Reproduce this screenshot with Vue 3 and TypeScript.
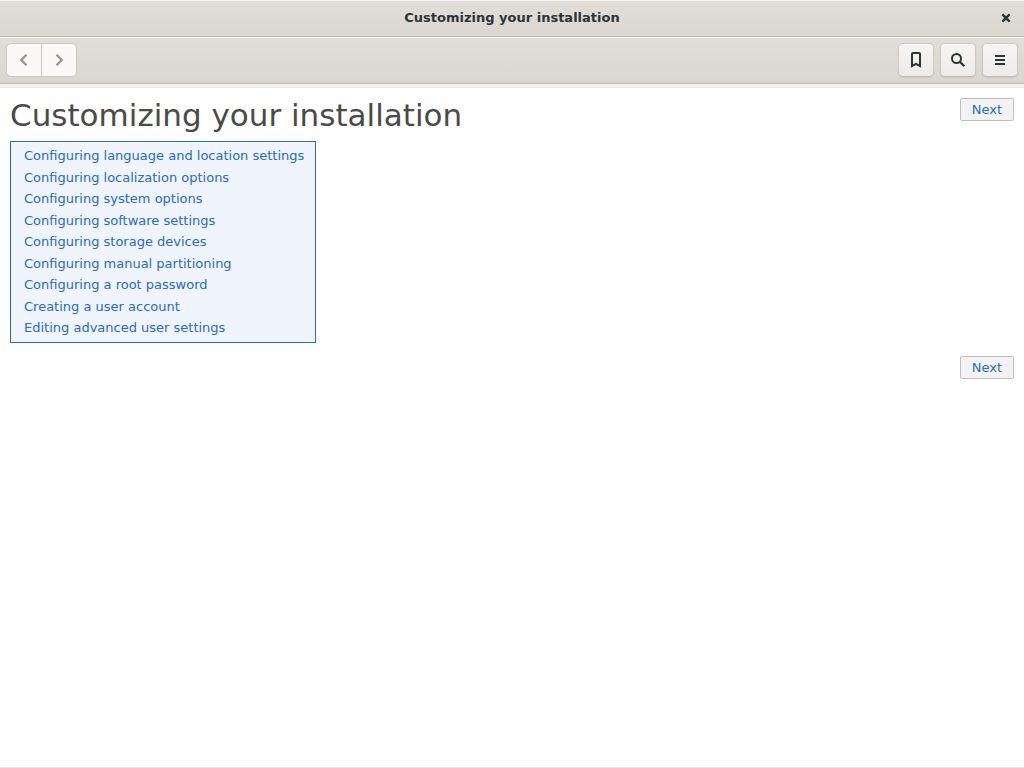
<script setup lang="ts">
import { ref } from 'vue'

const title = ref<string>('Customizing your installation')

const topics: string[] = [
  'Configuring language and location settings',
  'Configuring localization options',
  'Configuring system options',
  'Configuring software settings',
  'Configuring storage devices',
  'Configuring manual partitioning',
  'Configuring a root password',
  'Creating a user account',
  'Editing advanced user settings',
]
</script>

<template>
  <div class="window">
    <header class="titlebar">
      <span class="caption">{{ title }}</span>
      <button class="close" type="button" aria-label="Close">
        <svg width="16" height="16" viewBox="0 0 16 16"><path d="M4.400 4.400 11.600 11.600M11.600 4.400 4.400 11.600" fill="none" stroke="#2e3436" stroke-width="2.400" /></svg>
      </button>
    </header>

    <nav class="toolbar">
      <div class="history">
        <button type="button" disabled aria-label="Back">
          <svg width="16" height="16" viewBox="0 0 16 16"><path d="M10.500 2.700 5.200 8l5.300 5.300" fill="none" stroke="#929595" stroke-width="2.200" /></svg>
        </button>
        <button type="button" disabled aria-label="Forward">
          <svg width="16" height="16" viewBox="0 0 16 16"><path d="M5.500 2.700 10.800 8l-5.300 5.300" fill="none" stroke="#929595" stroke-width="2.200" /></svg>
        </button>
      </div>
      <div class="actions">
        <button type="button" aria-label="Bookmarks">
          <svg width="16" height="16" viewBox="0 0 16 16"><path d="M4 14V2q0-1 1-1h6q1 0 1 1v12L8 11.800Z" fill="none" stroke="#2e3436" stroke-width="2" /></svg>
        </button>
        <button type="button" aria-label="Search">
          <svg width="16" height="16" viewBox="0 0 16 16"><circle cx="6.500" cy="6.500" r="4.500" fill="none" stroke="#2e3436" stroke-width="2" /><path d="M9.800 9.800 14.300 14.300" stroke="#2e3436" stroke-width="2.300" /></svg>
        </button>
        <button type="button" aria-label="Menu">
          <svg width="16" height="16" viewBox="0 0 16 16"><path d="M3 4h10M3 8h10M3 12h10" stroke="#2e3436" stroke-width="2" /></svg>
        </button>
      </div>
    </nav>

    <div class="strip"></div>

    <main class="page">
      <div class="heading">
        <h1>{{ title }}</h1>
        <a class="next" href="#next">Next</a>
      </div>
      <ul class="topics">
        <li v-for="topic in topics" :key="topic"><a href="#topic">{{ topic }}</a></li>
      </ul>
      <div class="footer">
        <a class="next" href="#next">Next</a>
      </div>
    </main>
  </div>
</template>

<style>
body {
  margin: 0;
  background: #ffffff;
}
</style>

<style scoped>
.window {
  box-sizing: border-box;
  display: flex;
  flex-direction: column;
  min-height: 100vh;
  border-bottom: 1px solid #e6e5e3;
  font-family: "DejaVu Sans", sans-serif;
  font-size: 13px;
}

.titlebar {
  display: grid;
  grid-template-columns: 1fr auto 1fr;
  align-items: center;
  height: 33px;
  padding: 0 10px 2px;
  border-top: 1px solid #f6f5f4;
  border-bottom: 1px solid #bfb8b1;
  background: linear-gradient(#e1deda, #dad6d2);
}

.caption {
  grid-column: 2;
  color: #2e3436;
  font-weight: bold;
  line-height: 17px;
}

button {
  display: flex;
  align-items: center;
  justify-content: center;
  padding: 0;
}

.close {
  justify-self: end;
  border: 0;
  background: none;
}

.toolbar {
  display: flex;
  align-items: center;
  justify-content: space-between;
  padding: 5px 6px 6px;
  border-top: 1px solid #f9f8f7;
  border-bottom: 1px solid #bfb8b1;
  background: linear-gradient(#e1deda, #dad6d2);
}

.history {
  display: flex;
  border: 1px solid #cdc7c2;
  border-radius: 5px;
  background: #faf9f8;
}

.history button {
  width: 34px;
  height: 32px;
  border: 0;
  background: none;
}

.history button + button {
  width: 35px;
  border-left: 1px solid #cdc7c2;
}

.actions {
  display: flex;
  gap: 6px;
}

.actions button {
  box-sizing: border-box;
  width: 36px;
  height: 34px;
  border: 1px solid #cdc7c2;
  border-bottom-color: #bfb8b1;
  border-radius: 5px;
  background: linear-gradient(#f6f5f4, #edebe9);
  box-shadow: inset 0 1px #ffffff, 0 1px 2px rgba(0, 0, 0, 0.07);
}

.strip {
  height: 3px;
  border-bottom: 1px solid #e8e7e6;
  background: #f6f5f4;
}

.page {
  padding: 10px;
}

.heading {
  display: flex;
  align-items: flex-start;
  justify-content: space-between;
}

h1 {
  margin: 0;
  padding-bottom: 8px;
  color: #4a4a48;
  font-size: 31px;
  font-weight: normal;
  line-height: 35px;
}

.next {
  padding: 2px 11px;
  border: 1px solid #bebebe;
  border-radius: 2px;
  background: #f3f3f3;
  color: #2a6bbd;
  line-height: 17px;
  text-decoration: none;
}

.topics {
  display: grid;
  grid-auto-rows: 22px 21px;
  width: fit-content;
  margin: 0;
  padding: 3px 11px 3px 13px;
  border: 1px solid #2a6bbd;
  background: #f0f5fd;
  line-height: 21px;
  list-style: none;
}

.topics a {
  color: #2a6bbd;
  text-decoration: none;
}

.footer {
  display: flex;
  justify-content: flex-end;
  margin-top: 13px;
}
</style>
